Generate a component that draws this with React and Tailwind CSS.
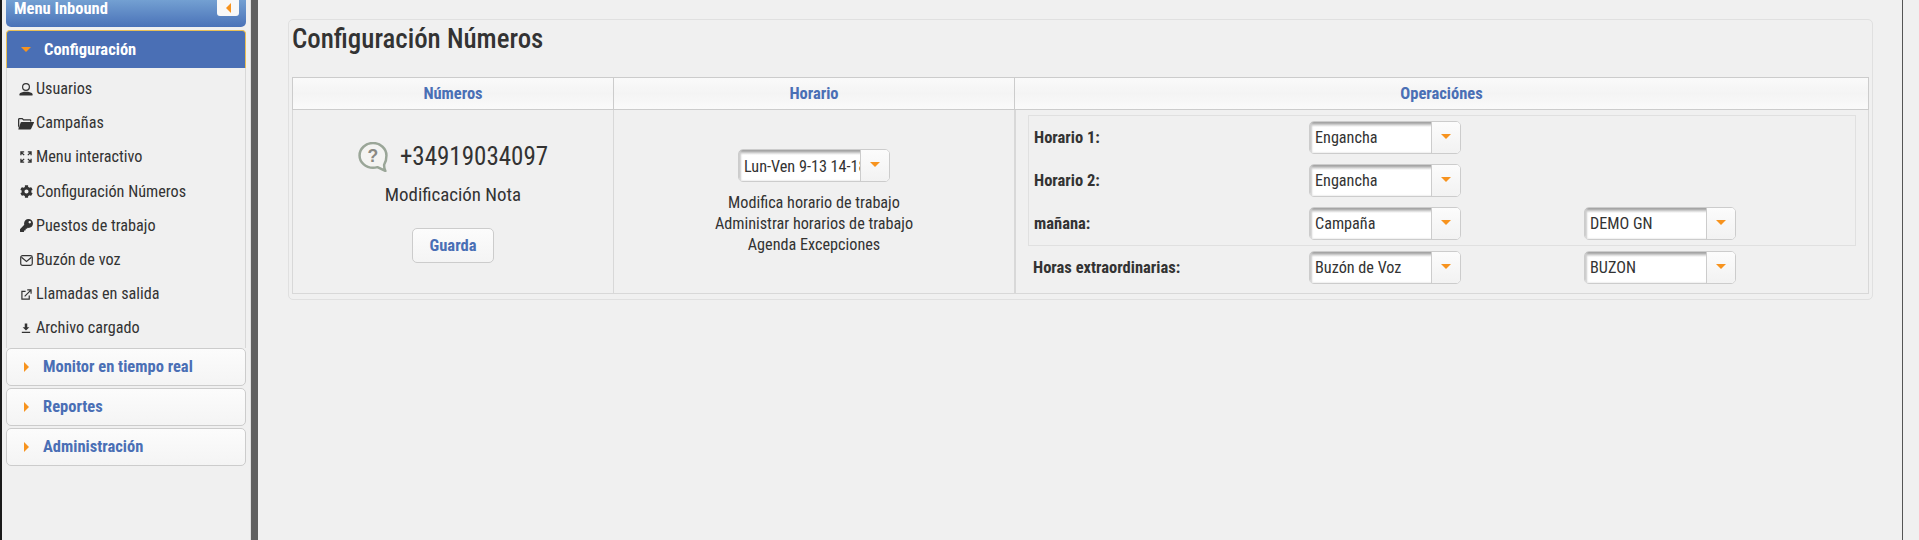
import { FaCog, FaKey } from 'react-icons/fa';

const condensed = "font-['Roboto','Liberation_Sans',sans-serif] [font-stretch:75%]";

function UserIcon() {
  return (
    <svg viewBox="0 0 14 14" className="w-[14px] h-[14px] text-[#333]">
      <circle cx="7" cy="5" r="3.4" fill="none" stroke="currentColor" strokeWidth="1.2" />
      <path d="M.5 13.500v-1.300c0-1.200 2-2 4.500-2.400h4c2.500.4 4.500 1.200 4.500 2.400v1.300z" fill="currentColor" />
    </svg>
  );
}

function FolderIcon() {
  return (
    <svg viewBox="0 0 16 13" className="w-[16px] h-[13px] text-[#333]" fill="currentColor">
      <path d="M0 11V2.500C0 1.500.7 1 1.500 1h3l1.300 1.300H12c.8 0 1.300.5 1.300 1.200V4.500H12V3.600H5.300L4 2.300H1.500c-.1 0-.2.100-.2.200v6z" />
      <path d="M3.500 5h12.300c.2 0 .3.200.2.400l-2.700 6.200c-.2.500-.7.900-1.300.9H.8c-.4 0-.6-.3-.4-.6l2.300-6.300c.1-.4.400-.6.800-.6z" />
    </svg>
  );
}

function ExpandIcon() {
  return (
    <svg viewBox="0 0 13 13" className="w-[12px] h-[12px] text-[#333]" fill="none" stroke="currentColor" strokeWidth="1.400">
      <path d="M1 4.500V1h3.500M1.300 1.300l3.200 3.200M8.500 1H12v3.500M11.700 1.300 8.500 4.500M1 8.500V12h3.500M1.300 11.700l3.200-3.200M8.500 12H12V8.500M11.700 11.700 8.500 8.500" />
    </svg>
  );
}

function MailIcon() {
  return (
    <svg viewBox="0 0 14 12" className="w-[13px] h-[11px] text-[#333]" fill="none" stroke="currentColor" strokeWidth="1.300">
      <rect x="0.700" y="0.700" width="12.600" height="10.600" rx="2" />
      <path d="M1.500 2.500 7 7l5.500-4.500" />
    </svg>
  );
}

function ExternalIcon() {
  return (
    <svg viewBox="0 0 12 12" className="w-[11px] h-[11px] text-[#333]" fill="none" stroke="currentColor" strokeWidth="1.300">
      <path d="M5 2.500H1v8.500h8V7" />
      <path d="M4 8l6.500-6.500M6.800 1h4.200v4.200" />
    </svg>
  );
}

function DownloadIcon() {
  return (
    <svg viewBox="0 0 12 12" className="w-[10px] h-[11px] text-[#333]" fill="currentColor">
      <path d="M4.500 0h3v4.500H10L6 8.500 2 4.500h2.500zM1 10h10v1.500H1z" />
    </svg>
  );
}

function HelpIcon() {
  return (
    <svg viewBox="1 1 28 29" className="w-[30px] h-[30px]">
      <path d="M15 2C7.800 2 2 7.500 2 14s5.800 12 13 12c1.600 0 3-.3 4.300-.7L27 29c-1-2-1.400-4-1.200-6.200C27.200 20.600 28 17.400 28 14 28 7.500 22.200 2 15 2z" fill="#f4f4f2" stroke="#9aa698" strokeWidth="2.400" strokeLinejoin="round" />
      <text x="15" y="20" textAnchor="middle" fontSize="17" fontWeight="700" fill="#8a8a84" fontFamily="Liberation Sans, sans-serif">?</text>
    </svg>
  );
}

const menuItems = [
  { label: 'Usuarios', icon: <UserIcon /> },
  { label: 'Campañas', icon: <FolderIcon /> },
  { label: 'Menu interactivo', icon: <ExpandIcon /> },
  { label: 'Configuración Números', icon: <FaCog className="w-[13px] h-[13px] text-[#333]" /> },
  { label: 'Puestos de trabajo', icon: <FaKey className="w-[13px] h-[13px] text-[#333]" /> },
  { label: 'Buzón de voz', icon: <MailIcon /> },
  { label: 'Llamadas en salida', icon: <ExternalIcon /> },
  { label: 'Archivo cargado', icon: <DownloadIcon /> },
];

function ArrowDown() {
  return <span className="w-0 h-0 border-x-[5px] border-x-transparent border-t-[5px] border-t-[#f7931e]" />;
}

function ArrowRight() {
  return <span className="w-0 h-0 border-y-[5px] border-y-transparent border-l-[5px] border-l-[#f7931e]" />;
}

function Select({ value }) {
  return (
    <div className="flex w-[152px] h-[33px] rounded-[5px] border border-[#ccc] overflow-hidden bg-white">
      <div className="flex-1 min-w-0 flex items-center pl-[5px] pt-[1px] overflow-hidden whitespace-nowrap text-[16.200px] text-[#333] bg-[linear-gradient(#8a8a8a,#d8d8d8_3px,#fff_5px)] shadow-[inset_2px_0_2px_#ccc]">
        {value}
      </div>
      <div className="w-[29px] shrink-0 flex justify-center pt-[12px] border-l border-[#ccc] bg-[linear-gradient(#fcfcfc,#f2f2f2)]">
        <ArrowDown />
      </div>
    </div>
  );
}

function AccordionHead({ label }) {
  return (
    <div className="h-[38px] ml-[4px] mr-[4px] flex items-center rounded-[5px] border border-[#ccc] bg-[linear-gradient(#fcfcfc,#f4f4f4)]">
      <span className="w-[36px] pl-[17px] flex"><ArrowRight /></span>
      <span className="pt-[1px] text-[16.500px] font-bold text-[#4a6fb5]">{label}</span>
    </div>
  );
}

function Sidebar() {
  return (
    <aside className="w-[249px] shrink-0 bg-[#f0f0f0] border-r border-[#ddd]">
      <div className="ml-[4px] mr-[4px] h-[27px] pl-[8px] pr-[7px] flex justify-between items-start rounded-b-[5px] bg-[linear-gradient(#73a0d2,#4a72b8)]">
        <span className="text-[16.500px] leading-[17px] font-bold text-white">Menu Inbound</span>
        <span className="w-[22px] h-[16px] flex items-center justify-center rounded-b-[3px] bg-[#f8f8f8]">
          <span className="w-0 h-0 border-y-[5px] border-y-transparent border-r-[5px] border-r-[#f7931e]" />
        </span>
      </div>
      <div className="ml-[4px] mr-[4px] mt-[3px] h-[38px] flex items-center rounded-t-[4px] bg-[#4a6fb5] border border-[#e9bf55] border-b-0">
        <span className="w-[37px] pl-[14px] flex"><ArrowDown /></span>
        <span className="pt-[1px] text-[16.500px] font-bold text-white">Configuración</span>
      </div>
      <nav className="ml-[4px] mr-[4px] h-[280px] border-x border-[#d8d8d8] pt-[4px]">
        {menuItems.map((item) => (
          <div key={item.label} className="h-[34.200px] flex items-center text-[16.200px] text-[#333]">
            <span className="w-[29px] pl-[9px] flex justify-center">{item.icon}</span>
            <span>{item.label}</span>
          </div>
        ))}
      </nav>
      <div className="flex flex-col gap-[2px]">
        <AccordionHead label="Monitor en tiempo real" />
        <AccordionHead label="Reportes" />
        <AccordionHead label="Administración" />
      </div>
    </aside>
  );
}

function Row({ label, first, second, labelClass = 'w-[280px]' }) {
  return (
    <div className="flex items-center h-[33px]">
      <span className={`pl-[5px] pt-[1px] text-[16.500px] font-bold text-[#333] ${labelClass}`}>{label}</span>
      <Select value={first} />
      {second && <div className="ml-[123px]"><Select value={second} /></div>}
    </div>
  );
}

function ColumnHead({ children, className = '' }) {
  return (
    <div className={`h-full flex items-center justify-center pt-[1px] text-[16.500px] font-bold text-[#4a6fb5] ${className}`}>
      {children}
    </div>
  );
}

export default function App() {
  return (
    <div className={`flex w-[1919px] h-[540px] overflow-hidden bg-[#f0f0f0] ${condensed}`}>
      <div className="w-[2px] shrink-0 bg-[#1a1a1a]" />
      <Sidebar />
      <div className="w-[7px] shrink-0 bg-[#5f5f5f]" />
      <main className="w-[1645px] shrink-0 pl-[30px] pt-[19px] border-r border-r-[#555]">
        <section className="w-[1585px] h-[281px] rounded-[5px] border border-[#e0e0e0] px-[3px]">
          <h1 className="h-[57px] pt-[3px] text-[26.900px] leading-[32px] font-medium text-[#333]">Configuración Números</h1>
          <div className="h-[217px] flex flex-col border-b border-[#d8d8d8]">
            <div className="grid grid-cols-[320px_401px_1fr] h-[33px] shrink-0 border border-[#ccc] bg-[linear-gradient(#fafafa,#f4f4f4_50%,#fafafa)]">
              <ColumnHead>Números</ColumnHead>
              <ColumnHead className="border-l border-[#ccc]">Horario</ColumnHead>
              <ColumnHead className="border-l border-[#ccc]">Operaciónes</ColumnHead>
            </div>
            <div className="grid grid-cols-[320px_401px_1fr] flex-1 border-x border-[#d8d8d8]">
              <div className="flex flex-col items-center pt-[32px]">
                <div className="flex items-center gap-[12px] h-[30px]">
                  <HelpIcon />
                  <span className="text-[25px] text-[#333]">+34919034097</span>
                </div>
                <span className="mt-[11px] text-[18.900px] leading-[24px] text-[#333]">Modificación Nota</span>
                <button className="mt-[21px] w-[82px] h-[35px] pt-[1px] rounded-[5px] border border-[#ccc] text-[16.500px] font-bold text-[#4a6fb5] bg-[linear-gradient(#fcfcfc,#f4f4f4)]">Guarda</button>
              </div>
              <div className="flex flex-col items-center pt-[39px] border-l border-[#d8d8d8] text-[16.200px] leading-[21px] text-[#333]">
                <Select value="Lun-Ven 9-13 14-18" />
                <span className="mt-[10px]">Modifica horario de trabajo</span>
                <span>Administrar horarios de trabajo</span>
                <span>Agenda Excepciones</span>
              </div>
              <div className="border-l-2 border-[#d8d8d8] px-[12px] pt-[5px]">
                <div className="h-[131px] border border-[#e0e0e0] pt-[5px] flex flex-col gap-[10px]">
                  <Row label="Horario 1:" first="Engancha" />
                  <Row label="Horario 2:" first="Engancha" />
                  <Row label="mañana:" first="Campaña" second="DEMO GN" />
                </div>
                <div className="mt-[5px]">
                  <Row label="Horas extraordinarias:" first="Buzón de Voz" second="BUZON" labelClass="w-[281px]" />
                </div>
              </div>
            </div>
          </div>
        </section>
      </main>
    </div>
  );
}
